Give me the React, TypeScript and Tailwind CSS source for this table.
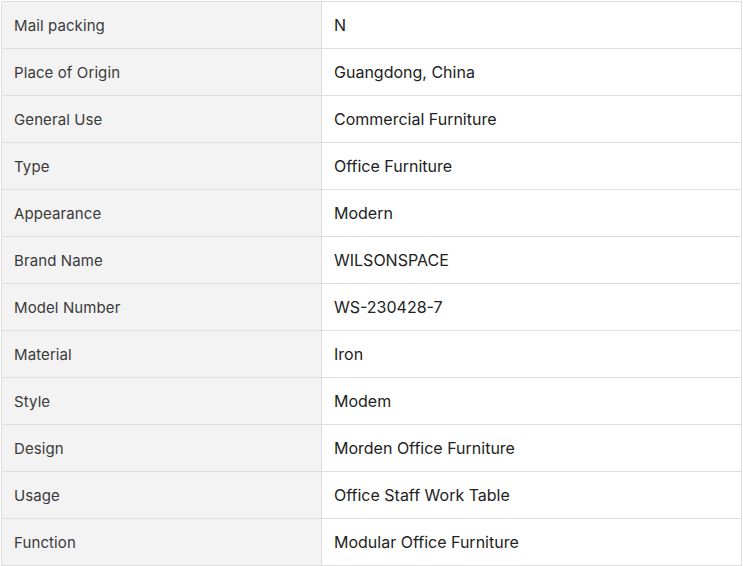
import React from 'react';

const rows: [string, string][] = [
  ['Mail packing', 'N'],
  ['Place of Origin', 'Guangdong, China'],
  ['General Use', 'Commercial Furniture'],
  ['Type', 'Office Furniture'],
  ['Appearance', 'Modern'],
  ['Brand Name', 'WILSONSPACE'],
  ['Model Number', 'WS-230428-7'],
  ['Material', 'Iron'],
  ['Style', 'Modem'],
  ['Design', 'Morden Office Furniture'],
  ['Usage', 'Office Staff Work Table'],
  ['Function', 'Modular Office Furniture'],
];

export default function App() {
  return (
    <div className="w-[743px] h-[566px] bg-white pt-px pl-px font-['Inter',sans-serif]">
      <table className="w-[741px] border-collapse table-fixed">
        <tbody>
          {rows.map(([k, v]) => (
            <tr key={k} className="h-[47px]">
              <td className="w-[320px] border border-[#dedede] bg-[#f3f3f3] pl-3 pt-0.5 text-[15px] tracking-[0.1px] text-[#3a3a3a]">{k}</td>
              <td className="border border-[#dedede] bg-white px-3 text-[16px] font-normal text-[#222]">{v}</td>
            </tr>
          ))}
        </tbody>
      </table>
    </div>
  );
}
